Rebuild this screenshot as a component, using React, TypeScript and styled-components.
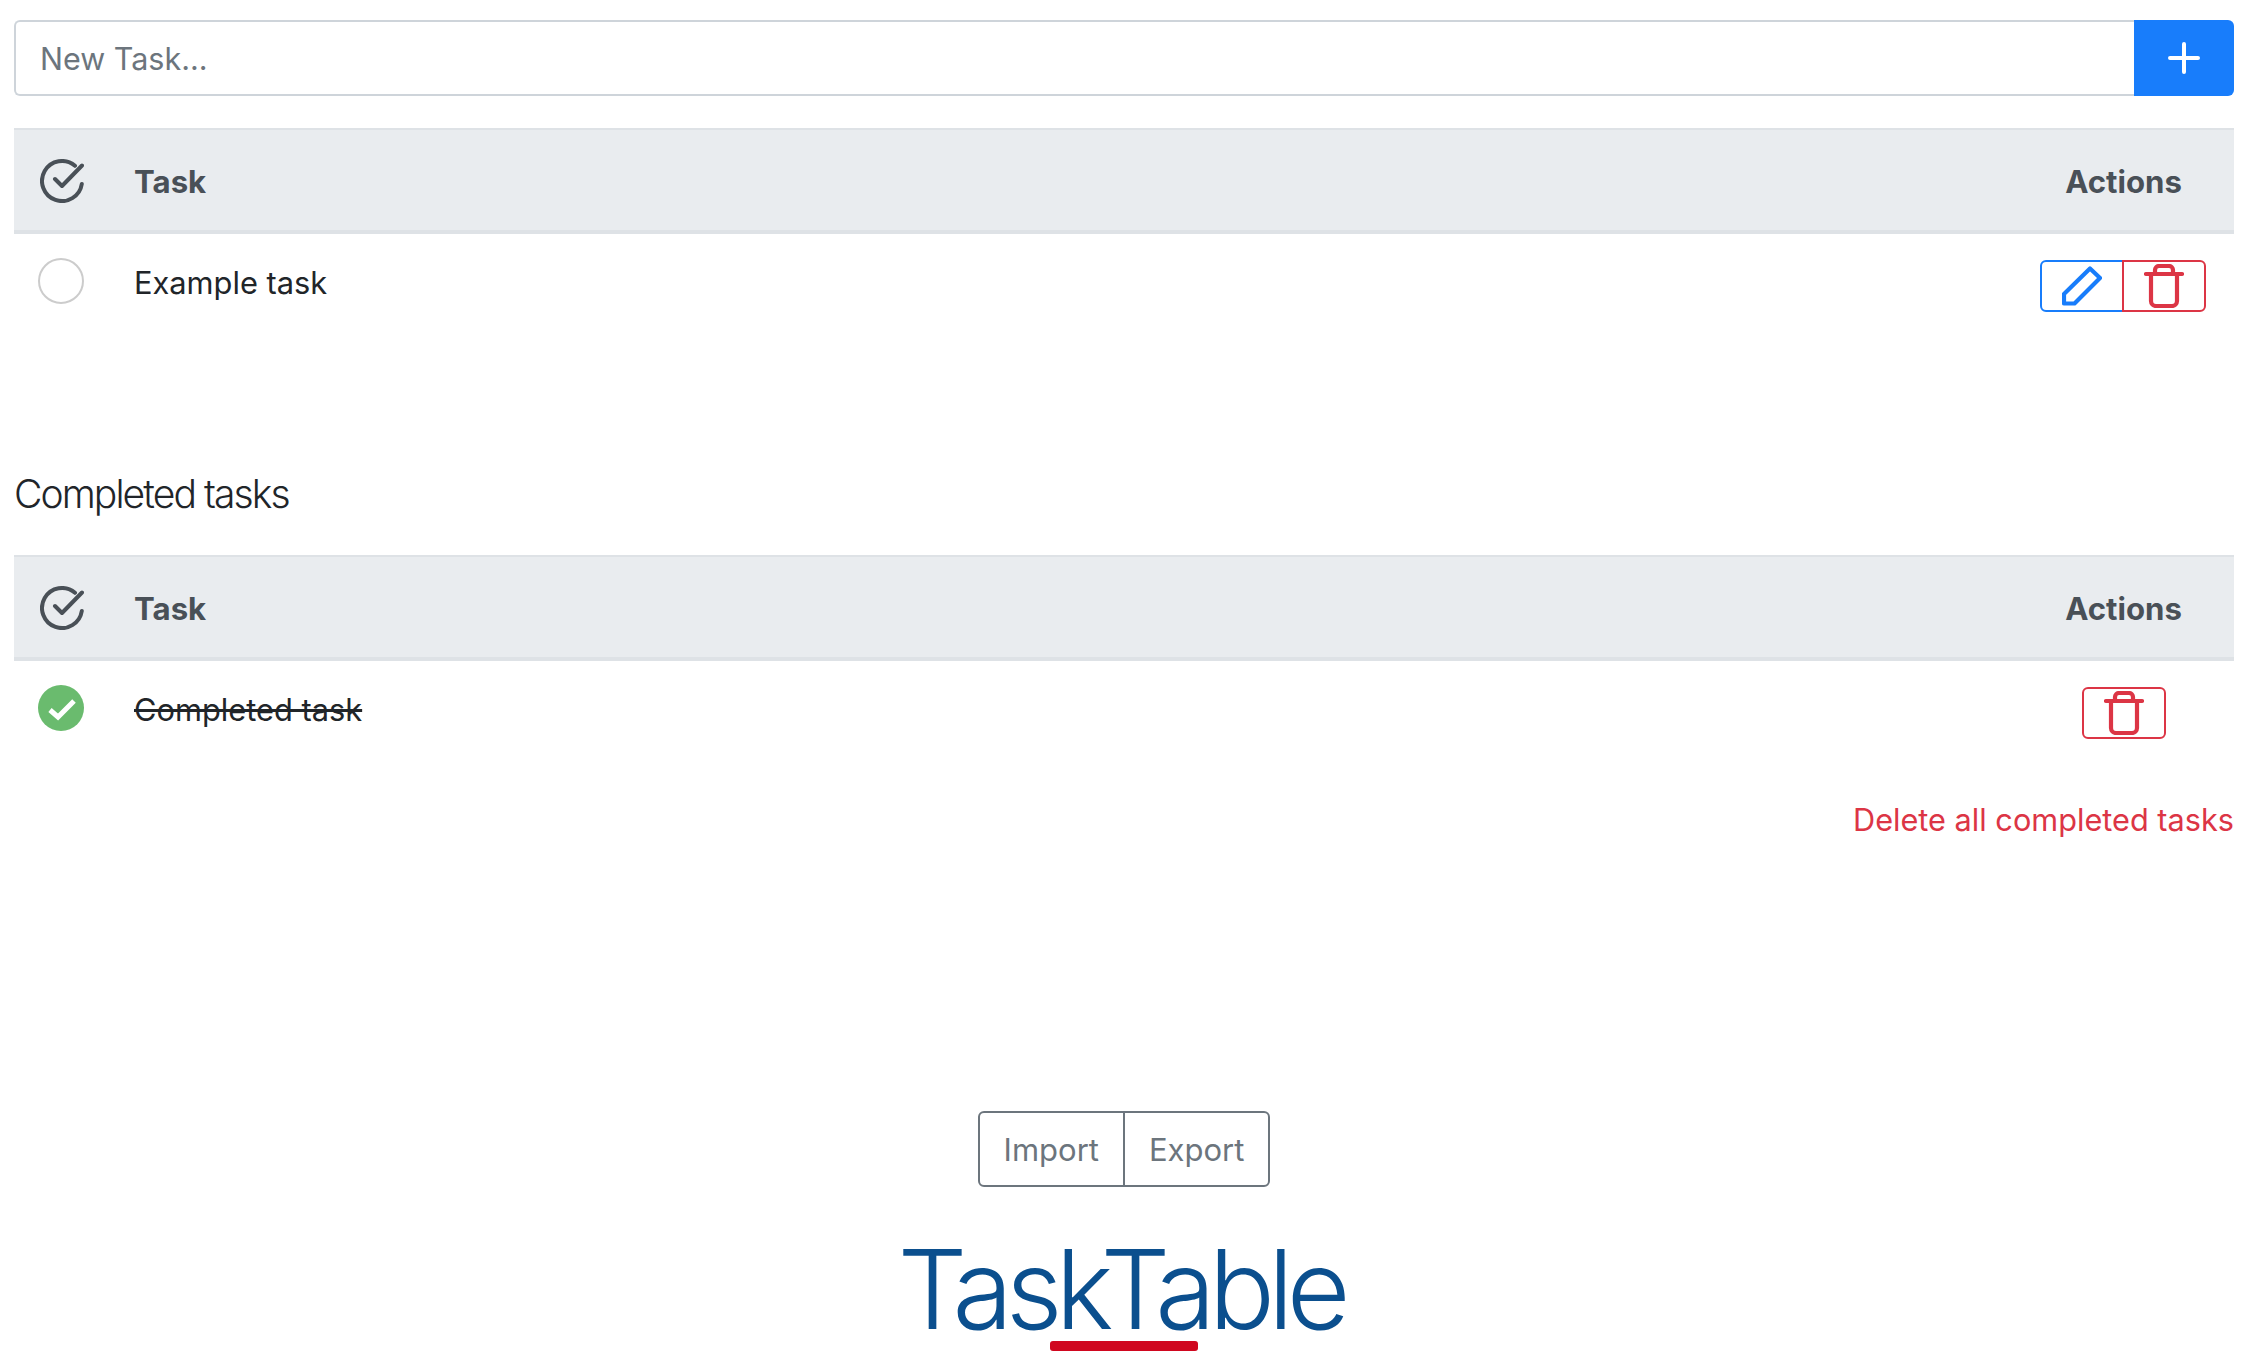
import React from 'react';
import styled, { createGlobalStyle } from 'styled-components';

const GlobalStyle = createGlobalStyle`
  html, body {
    margin: 0;
    padding: 0;
    background: #fff;
    font-family: Inter, "Liberation Sans", sans-serif;
    color: #212529;
  }
  * { box-sizing: border-box; }
`;

const Page = styled.div`
  width: 2258px;
  height: 1370px;
  overflow: hidden;
  padding: 20px 24px 0 14px;
  display: flex;
  flex-direction: column;
`;

const InputGroup = styled.form`
  display: flex;
  height: 76px;
  margin: 0 0 32px;
`;

const TaskInput = styled.input`
  flex: 1;
  min-width: 0;
  height: 100%;
  padding: 0 24px;
  border: 2px solid #ced4da;
  border-right: 0;
  border-radius: 6px 0 0 6px;
  font-family: inherit;
  font-size: 30.5px;
  color: #495057;
  outline: none;

  &::placeholder {
    color: #6c757d;
    opacity: 1;
  }
`;

const AddButton = styled.button`
  width: 100px;
  height: 100%;
  padding: 0;
  border: 0;
  border-radius: 0 6px 6px 0;
  background: #187dfb;
  display: flex;
  align-items: center;
  justify-content: center;
`;

const TableHead = styled.div`
  height: 106px;
  display: flex;
  align-items: center;
  padding: 0 52px 0 26px;
  background: #e9ecef;
  border-top: 2px solid #dee2e6;
  border-bottom: 4px solid #dee2e6;
  color: #495057;
  font-size: 31.2px;
  font-weight: 700;
`;

const HeadIcon = styled.svg`
  flex: none;
  width: 44px;
  height: 44px;
  margin-top: 1px;
  fill: none;
  stroke: #495057;
  stroke-width: 4;
  stroke-linecap: round;
  stroke-linejoin: round;
`;

const HeadTask = styled.div`
  flex: 1;
  margin-left: 50px;
  padding-top: 4px;
`;

const HeadActions = styled.div`
  padding-top: 4px;
`;

const TableRow = styled.div`
  height: 106px;
  display: flex;
  align-items: flex-start;
  padding: 24px 28px 0 24px;
`;

const RowCheck = styled.span<{ $done?: boolean }>`
  flex: none;
  width: 46px;
  height: 46px;
  border-radius: 50%;
  border: ${(p) => (p.$done ? '0' : '2px solid #ccc')};
  background: ${(p) => (p.$done ? '#6abb6e' : '#fff')};
  display: flex;
  align-items: center;
  justify-content: center;
`;

const RowText = styled.div<{ $done?: boolean }>`
  flex: 1;
  margin-left: 50px;
  padding-top: 3px;
  line-height: 44px;
  font-size: 30.8px;
  color: #212529;
  text-decoration: ${(p) => (p.$done ? 'line-through' : 'none')};
`;

const ActionGroup = styled.div<{ $single?: boolean }>`
  flex: none;
  display: flex;
  margin-top: 2px;
  margin-right: ${(p) => (p.$single ? '40px' : '0')};
`;

const IconButton = styled.button<{ $tone: 'blue' | 'red'; $pos?: 'left' | 'right' }>`
  width: 84px;
  height: 52px;
  padding: 0;
  background: #fff;
  border: 2px solid ${(p) => (p.$tone === 'blue' ? '#187dfb' : '#dc3545')};
  color: ${(p) => (p.$tone === 'blue' ? '#187dfb' : '#dc3545')};
  border-radius: ${(p) =>
    p.$pos === 'left' ? '6px 0 0 6px' : p.$pos === 'right' ? '0 6px 6px 0' : '6px'};
  margin-left: ${(p) => (p.$pos === 'right' ? '-2px' : '0')};
  display: flex;
  align-items: center;
  justify-content: center;
`;

const SectionTitle = styled.h2`
  margin: 0;
  height: 215px;
  padding-top: 132px;
  font-size: 39px;
  line-height: 44px;
  font-weight: 300;
  letter-spacing: -1.9px;
  color: #212529;
`;

const DeleteAllRow = styled.div`
  display: flex;
  justify-content: flex-end;
  margin-top: 31px;
`;

const DeleteAll = styled.a`
  font-size: 30.7px;
  line-height: 44px;
  color: #dc3545;
`;

const Footer = styled.div`
  margin-top: 269px;
  display: flex;
  flex-direction: column;
  align-items: center;
`;

const DataGroup = styled.div`
  display: flex;
  height: 76px;
`;

const DataButton = styled.button<{ $pos: 'left' | 'right' }>`
  height: 100%;
  padding: 0 24px;
  background: #fff;
  border: 2px solid #6c757d;
  border-radius: ${(p) => (p.$pos === 'left' ? '6px 0 0 6px' : '0 6px 6px 0')};
  margin-left: ${(p) => (p.$pos === 'right' ? '-2px' : '0')};
  color: #6c757d;
  font-family: inherit;
  font-size: 31px;
`;

const Logo = styled.div`
  position: relative;
  margin-top: 35px;
  margin-right: 7px;
  font-size: 110px;
  line-height: 134px;
  font-weight: 300;
  letter-spacing: -7px;
  color: #0b4f8e;
`;

const LogoBar = styled.span`
  position: absolute;
  left: calc(50% - 70px);
  bottom: 5px;
  width: 148px;
  height: 10px;
  border-radius: 3px;
  background: #d0071f;
`;

const CheckCircle = () => (
  <HeadIcon viewBox="0 0 44 44">
    <path d="M35 6.8A20 20 0 1 0 41.8 25" />
    <path d="M15 20l7 7L42 6.500" />
  </HeadIcon>
);

const PlusIcon = () => (
  <svg width="32" height="32" viewBox="0 0 32 32" fill="none" stroke="#fff" strokeWidth="4" strokeLinecap="round">
    <path d="M16 2v28M2 16h28" />
  </svg>
);

const DoneIcon = () => (
  <svg width="46" height="46" viewBox="0 0 46 46" fill="none" stroke="#fff" strokeWidth="5">
    <path d="M12 25l8 7L36 16" />
  </svg>
);

const PencilIcon = () => (
  <svg width="40" height="40" viewBox="0 0 40 40" fill="none" stroke="currentColor" strokeWidth="4.2" strokeLinejoin="round">
    <path d="M2 28L28 2.500l10 9.500L12.500 37.500H2z" />
  </svg>
);

const TrashIcon = () => (
  <svg width="40" height="44" viewBox="0 0 40 44" fill="none" stroke="currentColor" strokeWidth="4.2" strokeLinecap="round">
    <path d="M2 10h36" />
    <path d="M11 9V6a4 4 0 0 1 4-4h10a4 4 0 0 1 4 4v3" />
    <path d="M7 10v27a5 5 0 0 0 5 5h16a5 5 0 0 0 5-5V10" />
  </svg>
);

const Head = () => (
  <TableHead>
    <CheckCircle />
    <HeadTask>Task</HeadTask>
    <HeadActions>Actions</HeadActions>
  </TableHead>
);

const App = () => {
  return (
    <Page>
      <GlobalStyle />
      <InputGroup>
        <TaskInput placeholder="New Task..." />
        <AddButton type="button"><PlusIcon /></AddButton>
      </InputGroup>

      <Head />
      <TableRow>
        <RowCheck />
        <RowText>Example task</RowText>
        <ActionGroup>
          <IconButton $tone="blue" $pos="left"><PencilIcon /></IconButton>
          <IconButton $tone="red" $pos="right"><TrashIcon /></IconButton>
        </ActionGroup>
      </TableRow>

      <SectionTitle>Completed tasks</SectionTitle>

      <Head />
      <TableRow>
        <RowCheck $done><DoneIcon /></RowCheck>
        <RowText $done>Completed task</RowText>
        <ActionGroup $single>
          <IconButton $tone="red"><TrashIcon /></IconButton>
        </ActionGroup>
      </TableRow>

      <DeleteAllRow>
        <DeleteAll>Delete all completed tasks</DeleteAll>
      </DeleteAllRow>

      <Footer>
        <DataGroup>
          <DataButton $pos="left">Import</DataButton>
          <DataButton $pos="right">Export</DataButton>
        </DataGroup>
        <Logo>
          TaskTable
          <LogoBar />
        </Logo>
      </Footer>
    </Page>
  );
};

export default App;
